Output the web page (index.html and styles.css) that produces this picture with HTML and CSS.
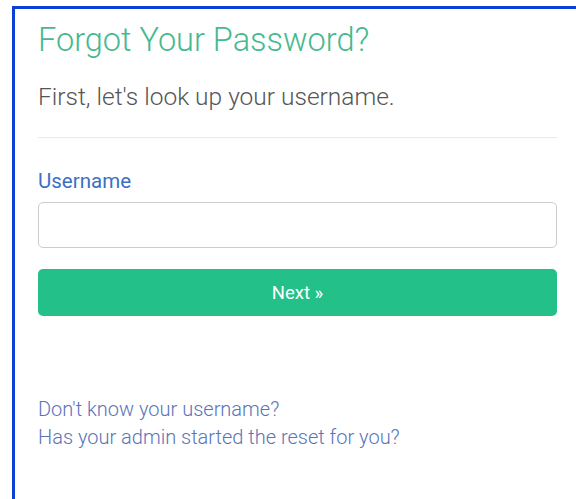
FILE: index.html
```html
<!DOCTYPE html>
<html lang="en">
<head>
<meta charset="utf-8">
<title>Forgot Your Password?</title>
<link rel="stylesheet" href="styles.css">
</head>
<body>
  <div class="panel">
    <div class="content">
      <h1 class="title">Forgot Your Password?</h1>
      <p class="lead">First, let's look up your username.</p>
      <hr class="divider">
      <form class="form">
        <label class="label" for="username">Username</label>
        <input class="input" id="username" type="text">
        <button class="btn" type="button">Next &raquo;</button>
      </form>
      <div class="links">
        <a class="link" href="#">Don't know your username?</a>
        <a class="link" href="#">Has your admin started the reset for you?</a>
      </div>
    </div>
  </div>
</body>
</html>
```
FILE: styles.css
```css
html, body {
  margin: 0;
  padding: 0;
  background: #ffffff;
  height: 100%;
}

body {
  font-family: Roboto, "Liberation Sans", sans-serif;
  padding: 6px 0 0 12px;
  box-sizing: border-box;
  overflow: hidden;
}

.panel {
  border-top: 3px solid #0c3fd8;
  border-left: 3px solid #0c3fd8;
  height: 100%;
  box-sizing: border-box;
  padding: 11px 0 0 23px;
}

.content {
  width: 519px;
}

.title {
  margin: 0;
  font-weight: 300;
  font-size: 32.5px;
  line-height: 40px;
  color: #45b98f;
}

.lead {
  margin: 21px 0 0;
  font-weight: 300;
  font-size: 24.5px;
  line-height: 32px;
  color: #555555;
}

.divider {
  margin: 24px 0 0;
  border: 0;
  border-top: 1px solid #ebebeb;
}

.form {
  display: flex;
  flex-direction: column;
  margin-top: 30px;
}

.label {
  font-size: 20.5px;
  line-height: 26px;
  color: #3b6fc6;
  font-weight: 400;
}

.input {
  margin-top: 8px;
  height: 46px;
  box-sizing: border-box;
  border: 1px solid #cccccc;
  border-radius: 5px;
  background: #fff;
  font: inherit;
}

.btn {
  margin-top: 21px;
  height: 47px;
  border: 0;
  border-radius: 5px;
  background: #23c08a;
  color: #ffffff;
  font-family: inherit;
  font-size: 18.5px;
  font-weight: 400;
  cursor: pointer;
}

.links {
  display: flex;
  flex-direction: column;
  margin-top: 79px;
}

.link {
  font-size: 20px;
  line-height: 28px;
  font-weight: 300;
  color: #5a74b8;
  text-decoration: none;
}
```
